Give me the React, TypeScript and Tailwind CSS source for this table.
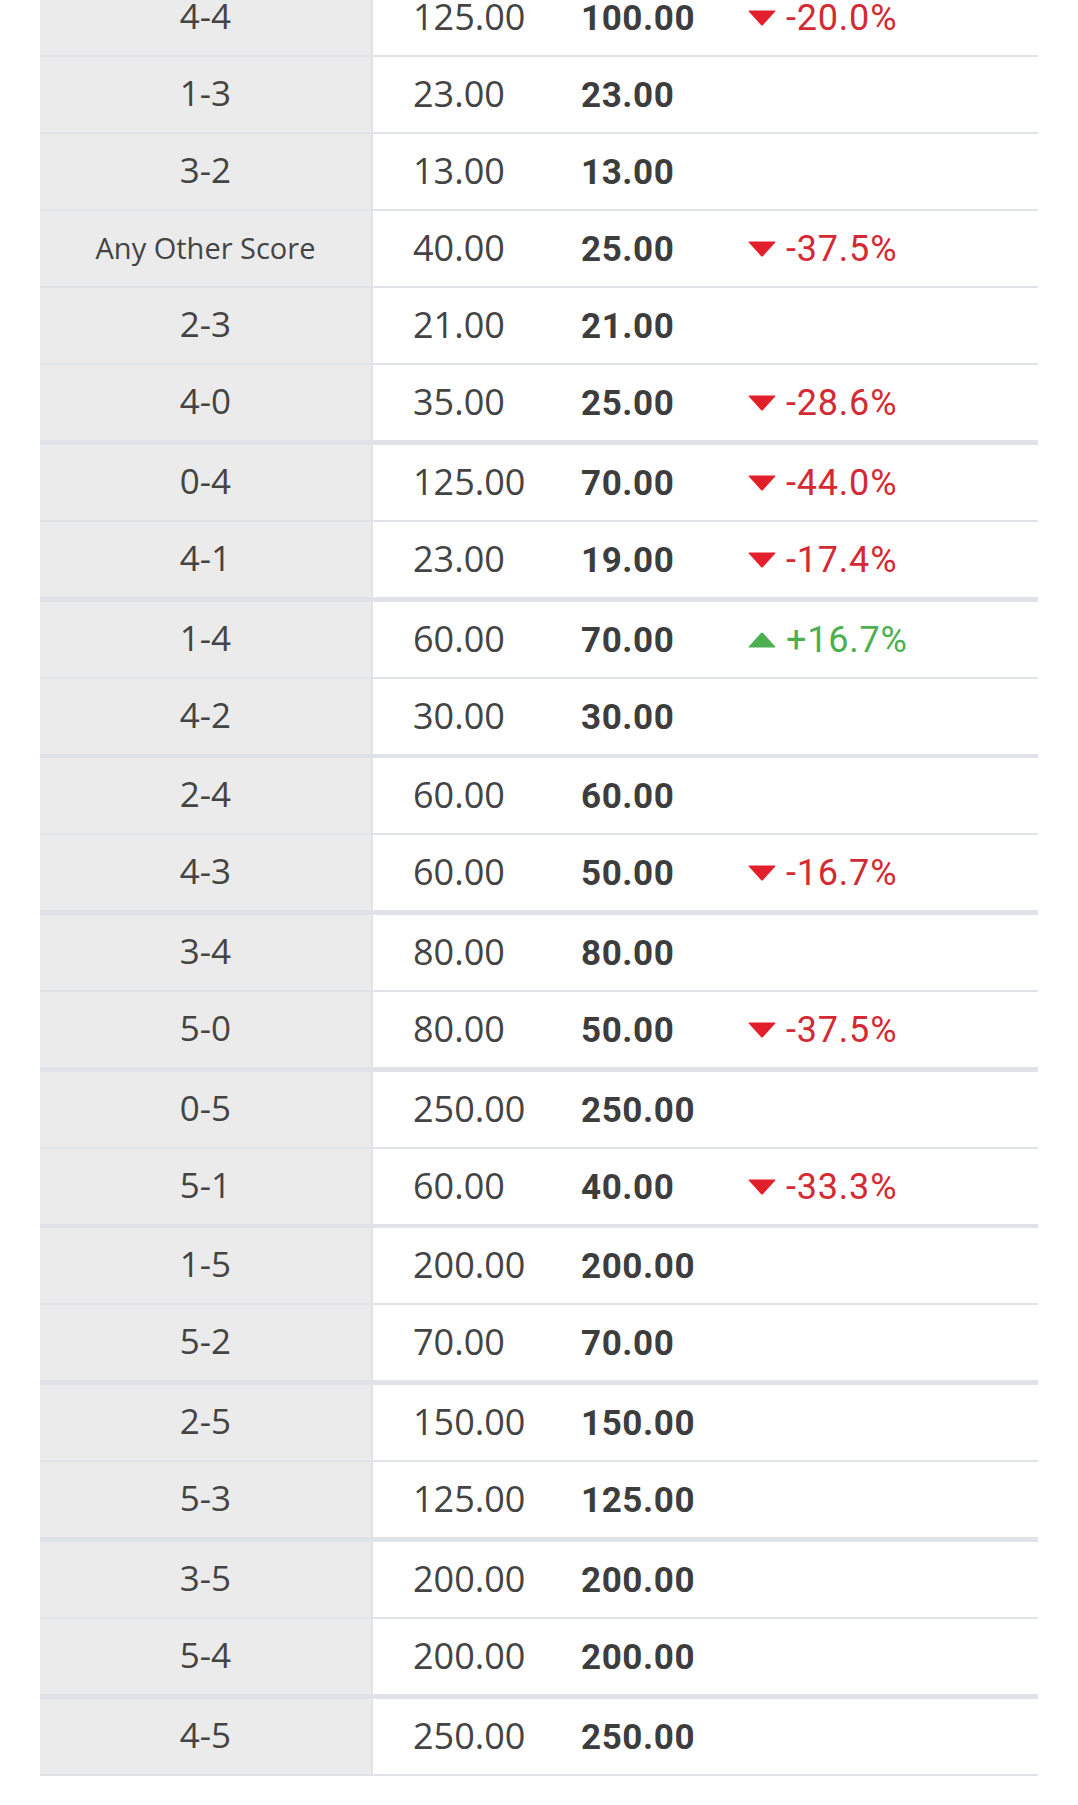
import React from "react";

type Row = {
  label: string;
  open: string;
  now: string;
  dir?: "up" | "down";
  pct?: string;
  sep: "thin" | "t5" | "t4";
};

const rows: Row[] = [
  { label: "4-4", open: "125.00", now: "100.00", dir: "down", pct: "-20.0%", sep: "thin" },
  { label: "1-3", open: "23.00", now: "23.00", sep: "thin" },
  { label: "3-2", open: "13.00", now: "13.00", sep: "thin" },
  { label: "Any Other Score", open: "40.00", now: "25.00", dir: "down", pct: "-37.5%", sep: "thin" },
  { label: "2-3", open: "21.00", now: "21.00", sep: "thin" },
  { label: "4-0", open: "35.00", now: "25.00", dir: "down", pct: "-28.6%", sep: "t5" },
  { label: "0-4", open: "125.00", now: "70.00", dir: "down", pct: "-44.0%", sep: "thin" },
  { label: "4-1", open: "23.00", now: "19.00", dir: "down", pct: "-17.4%", sep: "t5" },
  { label: "1-4", open: "60.00", now: "70.00", dir: "up", pct: "+16.7%", sep: "thin" },
  { label: "4-2", open: "30.00", now: "30.00", sep: "t4" },
  { label: "2-4", open: "60.00", now: "60.00", sep: "thin" },
  { label: "4-3", open: "60.00", now: "50.00", dir: "down", pct: "-16.7%", sep: "t5" },
  { label: "3-4", open: "80.00", now: "80.00", sep: "thin" },
  { label: "5-0", open: "80.00", now: "50.00", dir: "down", pct: "-37.5%", sep: "t5" },
  { label: "0-5", open: "250.00", now: "250.00", sep: "thin" },
  { label: "5-1", open: "60.00", now: "40.00", dir: "down", pct: "-33.3%", sep: "t4" },
  { label: "1-5", open: "200.00", now: "200.00", sep: "thin" },
  { label: "5-2", open: "70.00", now: "70.00", sep: "t5" },
  { label: "2-5", open: "150.00", now: "150.00", sep: "thin" },
  { label: "5-3", open: "125.00", now: "125.00", sep: "t5" },
  { label: "3-5", open: "200.00", now: "200.00", sep: "thin" },
  { label: "5-4", open: "200.00", now: "200.00", sep: "t5" },
  { label: "4-5", open: "250.00", now: "250.00", sep: "thin" },
];

function Arrow({ dir }: { dir: "up" | "down" }) {
  if (dir === "down") {
    return (
      <svg width="28" height="16" viewBox="0 0 28 16" className="mr-[10px] shrink-0">
        <path d="M1.2 0.5 H26.8 Q28 0.5 27.2 1.6 L15 15 Q14 16 13 15 L0.8 1.6 Q0 0.5 1.2 0.5 Z" fill="#e21f2b" />
      </svg>
    );
  }
  return (
    <svg width="28" height="16" viewBox="0 0 28 16" className="mr-[10px] shrink-0">
      <path d="M1.2 15.5 H26.8 Q28 15.5 27.2 14.4 L15 1 Q14 0 13 1 L0.8 14.4 Q0 15.5 1.2 15.5 Z" fill="#4caf50" />
    </svg>
  );
}

export default function App() {
  return (
    <div className="min-h-[1805px] w-full bg-white overflow-hidden">
      <div className="ml-[40px] w-[998px] -mt-[20px]">
        {rows.map((r, i) => {
          const sepClass =
            r.sep === "thin"
              ? "border-b-2"
              : r.sep === "t5"
              ? "border-b-[5px]"
              : "border-b-4";
          return (
            <div key={i} className={`flex border-[#dfe2e6] ${sepClass}`}>
              <div
                className={`w-[333px] h-[75px] shrink-0 bg-[#ebebeb] border-r-2 border-[#dfe2e6] flex items-center justify-center pb-[2px] text-[#444444] font-['Open_Sans',sans-serif] ${
                  r.label.length > 4 ? "text-[29px]" : "text-[35px]"
                }`}
              >
                {r.label}
              </div>
              <div className="w-[166px] h-[75px] shrink-0 flex items-center pl-[40px] pb-[2px] text-[36px] text-[#444444] font-['Open_Sans',sans-serif]">
                {r.open}
              </div>
              <div className="w-[166px] h-[75px] shrink-0 flex items-center pl-[42px] pt-[3px] text-[35px] tracking-[0.6px] font-bold text-[#3d3d3d] font-['Roboto',sans-serif]">
                {r.now}
              </div>
              <div className="w-[332px] h-[75px] shrink-0 flex items-center pl-[43px] pt-[1px] font-['Roboto',sans-serif] text-[36px] tracking-[0.8px]">
                {r.dir && r.pct ? (
                  <>
                    <Arrow dir={r.dir} />
                    <span className={r.dir === "down" ? "text-[#d42a33]" : "text-[#4caf50]"}>{r.pct}</span>
                  </>
                ) : null}
              </div>
            </div>
          );
        })}
      </div>
    </div>
  );
}
